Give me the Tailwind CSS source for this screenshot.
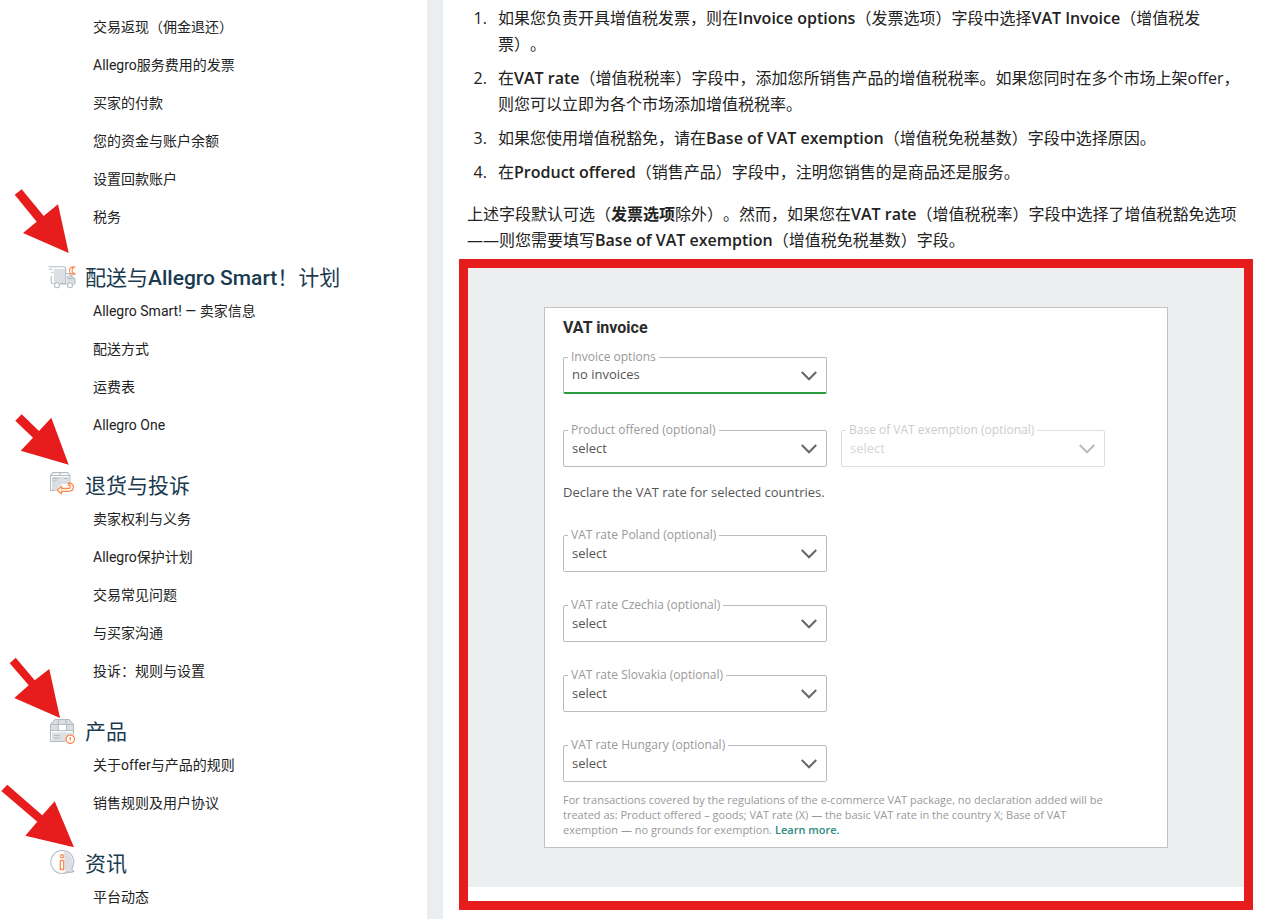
<!DOCTYPE html>
<html lang="zh-CN">
<head>
    <meta charset="UTF-8">
    <meta name="viewport" content="width=device-width, initial-scale=1.0">
    <title>Allegro 卖家帮助 - VAT invoice</title>
    <script src="https://cdn.jsdelivr.net/npm/@tailwindcss/browser@4"></script>
</head>
<body class="relative bg-[#ebeef1] text-[#222] [text-spacing-trim:space-all]">
    <div class="flex gap-4 min-h-screen">
        <!-- Sidebar -->
        <nav class="w-[427px] shrink-0 bg-white pl-12 pt-2 font-['Roboto','Noto_Sans_CJK_SC',sans-serif] text-sm">
            <ul class="pl-[45px] leading-[38px]">
                <li><a href="#">交易返现（佣金退还）</a></li>
                <li><a href="#">Allegro服务费用的发票</a></li>
                <li><a href="#">买家的付款</a></li>
                <li><a href="#">您的资金与账户余额</a></li>
                <li><a href="#">设置回款账户</a></li>
                <li><a href="#">税务</a></li>
            </ul>

            <h2 class="flex items-center gap-[9px] mt-7 h-7 text-[21px] leading-7 font-normal text-[#1a3a4f]">
                <svg class="size-7 shrink-0" viewBox="0 0 28 28" fill="none" stroke="#b4bcc3" stroke-width="1.1">
                    <path d="M6 5h12v14H6zM19 13l2-3h3l3 4v5h-8z" fill="#dbdfe4" stroke="none"/>
                    <path d="M.5 2.7h15.2a2 2 0 0 1 2 2v14.8H12M6.2 19.5H4.7a1.5 1.5 0 0 1-1.5-1.5v-6"/>
                    <path d="M1 5.2h3.200M3 8.200h2.500M18 9.500h3.500l3 4.500 2.500 1v5h-2M19.500 20H12M20 12v2.500h4"/>
                    <circle cx="9" cy="21.3" r="2.5" fill="#fff"/>
                    <circle cx="22" cy="21.3" r="2.5" fill="#fff"/>
                    <path d="M26.5 3c-3.5-.6-5.5 1.5-5 4 .4 2.5 3 4 5.500 3-2-.8-3-2-3-3.700S25 3.700 26.500 3z" stroke="#fa8b4f"/>
                </svg>
                <span>配送与<span class="font-medium">Allegro Smart</span>！计划</span>
            </h2>
            <ul class="pl-[45px] leading-[38px]">
                <li><a href="#">Allegro Smart! — 卖家信息</a></li>
                <li><a href="#">配送方式</a></li>
                <li><a href="#">运费表</a></li>
                <li><a href="#">Allegro One</a></li>
            </ul>

            <h2 class="flex items-center gap-[9px] mt-7 h-7 text-[21px] leading-7 font-normal text-[#1a3a4f]">
                <svg class="size-7 shrink-0" viewBox="0 0 28 28" fill="none" stroke="#b4bcc3" stroke-width="1.1">
                    <path d="M4 5h17v7h-7l-6 6H4z" fill="#dbdfe4" stroke="none"/>
                    <path d="M7.5 18.5h-5v-15L5 .6h14.5L22 3.500V11M2.500 3.500H22M12.200.6v2.900M4.500 6.500h6M4.500 9h4M16 6.500h3.500"/>
                    <path d="M13.5 14.5v2h7c2.500 0 2.500-3.500 0-3.500v-2c6.500-.2 6.500 8.300 0 8.300h-7v2.400L9 18z" stroke="#fa8b4f" stroke-width="1.3" fill="#fff"/>
                </svg>
                退货与投诉
            </h2>
            <ul class="pl-[45px] leading-[38px]">
                <li><a href="#">卖家权利与义务</a></li>
                <li><a href="#">Allegro保护计划</a></li>
                <li><a href="#">交易常见问题</a></li>
                <li><a href="#">与买家沟通</a></li>
                <li><a href="#">投诉：规则与设置</a></li>
            </ul>

            <h2 class="flex items-center gap-[9px] mt-7 h-7 text-[21px] leading-7 font-normal text-[#1a3a4f]">
                <svg class="size-7 shrink-0" viewBox="0 0 28 28" fill="none" stroke="#b4bcc3" stroke-width="1.1">
                    <path d="M4 14.5h21v4h-5l-2 5H4z" fill="#dbdfe4" stroke="none"/>
                    <path d="M2.5 6.5 7 1.5h14l4.500 5v6h-23z" fill="#dbdfe4"/>
                    <path d="M11 1.5 10 6.5M17.5 1.5l1 5M2.500 12.500V23.500H17M25.500 12.500V16.500M2.500 6.500h23"/>
                    <path d="M10.2 6.5h8.300v6.300h-8.300z" fill="#fff"/>
                    <path d="M6 17.5h6M6 20h6"/>
                    <circle cx="22.3" cy="21.3" r="4.2" fill="#fff" stroke="#fa8b4f" stroke-width="1.3"/>
                    <path d="M22.3 18.9v3.700" stroke="#fa8b4f" stroke-width="1.3"/>
                </svg>
                产品
            </h2>
            <ul class="pl-[45px] leading-[38px]">
                <li><a href="#">关于offer与产品的规则</a></li>
                <li><a href="#">销售规则及用户协议</a></li>
            </ul>

            <h2 class="flex items-center gap-[9px] mt-7 h-7 text-[21px] leading-7 font-normal text-[#1a3a4f]">
                <svg class="size-7 shrink-0" viewBox="0 0 28 28" fill="none" stroke="#b4bcc3" stroke-width="1.1">
                    <path d="M16 1.5c8 2 11 11 7.500 17.500l2 2.300c-3 .4-4 2.200-8.500 2.200z" fill="#dbdfe4" stroke="none"/>
                    <path d="M23.8 18.5A11.5 11.5 0 1 0 14 23.500c2.500 0 4-.4 5.800-1.500 2 .6 4.500.3 6-.7-1.200-.5-1.800-1.500-2-2.800z"/>
                    <circle cx="14" cy="6.3" r="1.6" fill="#fff" stroke="#fa8b4f" stroke-width="1.3"/>
                    <rect x="12.3" y="10.5" width="3.4" height="9" rx=".6" fill="#fff" stroke="#fa8b4f" stroke-width="1.3"/>
                </svg>
                资讯
            </h2>
            <ul class="pl-[45px] leading-[38px]">
                <li><a href="#">平台动态</a></li>
            </ul>
        </nav>

        <!-- Article -->
        <main class="flex-1 min-w-0 bg-white pt-[5px] pl-4 pr-[9px] font-['Open_Sans','Noto_Sans_CJK_SC',sans-serif]">
            <div class="px-2 text-base leading-[26px]">
                <ol class="list-decimal pl-6 space-y-2">
                    <li class="pl-[7px]">如果您负责开具增值税发票，则在<b class="font-semibold">Invoice options</b>（发票选项）字段中选择<b class="font-semibold">VAT Invoice</b>（增值税发票）。</li>
                    <li class="pl-[7px]">在<b class="font-semibold">VAT rate</b>（增值税税率）字段中，添加您所销售产品的增值税税率。如果您同时在多个市场上架offer，则您可以立即为各个市场添加增值税税率。</li>
                    <li class="pl-[7px]">如果您使用增值税豁免，请在<b class="font-semibold">Base of VAT exemption</b>（增值税免税基数）字段中选择原因。</li>
                    <li class="pl-[7px]">在<b class="font-semibold">Product offered</b>（销售产品）字段中，注明您销售的是商品还是服务。</li>
                </ol>
                <p class="mt-4">上述字段默认可选（<b>发票选项</b>除外）。然而，如果您在<b class="font-semibold">VAT rate</b>（增值税税率）字段中选择了增值税豁免选项——则您需要填写<b class="font-semibold">Base of VAT exemption</b>（增值税免税基数）字段。</p>
            </div>

            <div class="mt-1.5 border-[9px] border-[#e71d1d] pb-3.5">
                <div class="bg-[#edeef0] px-[76px] py-[39px]">
                    <form class="bg-white border border-[#bfc1c4] px-[18px] py-2.5 text-[13px] text-[#555]">
                        <h3 class="font-['Roboto',sans-serif] font-bold text-base leading-5 text-[#2b2b2b]">VAT invoice</h3>

                        <div class="relative mt-[19px] w-[264px]">
                            <label for="invoiceOptions" class="absolute left-[5px] -top-2 bg-white px-[3px] text-xs leading-4 text-[#999]">Invoice options</label>
                            <select id="invoiceOptions" class="block w-full h-[37px] appearance-none rounded-xs border border-b-2 border-[#bbb] border-b-[#2b9d3f] bg-white px-2">
                                <option>no invoices</option>
                            </select>
                            <svg class="absolute right-2.5 top-3.5 w-4 h-[10px] pointer-events-none" viewBox="0 0 16 10" fill="none" stroke="#666" stroke-width="2"><path d="M.8 1 8 8.3 15.2 1"/></svg>
                        </div>

                        <div class="flex gap-3.5 mt-9">
                            <div class="relative w-[264px]">
                                <label for="productOffered" class="absolute left-[5px] -top-2 bg-white px-[3px] text-xs leading-4 text-[#999]">Product offered (optional)</label>
                                <select id="productOffered" class="block w-full h-[37px] appearance-none rounded-xs border border-[#bbb] bg-white px-2">
                                    <option>select</option>
                                </select>
                                <svg class="absolute right-2.5 top-3.5 w-4 h-[10px] pointer-events-none" viewBox="0 0 16 10" fill="none" stroke="#666" stroke-width="2"><path d="M.8 1 8 8.3 15.2 1"/></svg>
                            </div>
                            <div class="relative w-[264px]">
                                <label for="vatExemption" class="absolute left-[5px] -top-2 bg-white px-[3px] text-xs leading-4 text-[#ccc]">Base of VAT exemption (optional)</label>
                                <select id="vatExemption" disabled class="block w-full h-[37px] appearance-none rounded-xs border border-[#ddd] bg-white px-2 text-[#d5d5d5] opacity-100">
                                    <option>select</option>
                                </select>
                                <svg class="absolute right-2.5 top-3.5 w-4 h-[10px] pointer-events-none" viewBox="0 0 16 10" fill="none" stroke="#bbb" stroke-width="2"><path d="M.8 1 8 8.3 15.2 1"/></svg>
                            </div>
                        </div>

                        <p class="mt-[15px] leading-5">Declare the VAT rate for selected countries.</p>

                        <div class="mt-[33px] w-[264px] space-y-[33px]">
                            <div class="relative">
                                <label for="vatPoland" class="absolute left-[5px] -top-2 bg-white px-[3px] text-xs leading-4 text-[#999]">VAT rate Poland (optional)</label>
                                <select id="vatPoland" class="block w-full h-[37px] appearance-none rounded-xs border border-[#bbb] bg-white px-2">
                                    <option>select</option>
                                </select>
                                <svg class="absolute right-2.5 top-3.5 w-4 h-[10px] pointer-events-none" viewBox="0 0 16 10" fill="none" stroke="#666" stroke-width="2"><path d="M.8 1 8 8.3 15.2 1"/></svg>
                            </div>
                            <div class="relative">
                                <label for="vatCzechia" class="absolute left-[5px] -top-2 bg-white px-[3px] text-xs leading-4 text-[#999]">VAT rate Czechia (optional)</label>
                                <select id="vatCzechia" class="block w-full h-[37px] appearance-none rounded-xs border border-[#bbb] bg-white px-2">
                                    <option>select</option>
                                </select>
                                <svg class="absolute right-2.5 top-3.5 w-4 h-[10px] pointer-events-none" viewBox="0 0 16 10" fill="none" stroke="#666" stroke-width="2"><path d="M.8 1 8 8.3 15.2 1"/></svg>
                            </div>
                            <div class="relative">
                                <label for="vatSlovakia" class="absolute left-[5px] -top-2 bg-white px-[3px] text-xs leading-4 text-[#999]">VAT rate Slovakia (optional)</label>
                                <select id="vatSlovakia" class="block w-full h-[37px] appearance-none rounded-xs border border-[#bbb] bg-white px-2">
                                    <option>select</option>
                                </select>
                                <svg class="absolute right-2.5 top-3.5 w-4 h-[10px] pointer-events-none" viewBox="0 0 16 10" fill="none" stroke="#666" stroke-width="2"><path d="M.8 1 8 8.3 15.2 1"/></svg>
                            </div>
                            <div class="relative">
                                <label for="vatHungary" class="absolute left-[5px] -top-2 bg-white px-[3px] text-xs leading-4 text-[#999]">VAT rate Hungary (optional)</label>
                                <select id="vatHungary" class="block w-full h-[37px] appearance-none rounded-xs border border-[#bbb] bg-white px-2">
                                    <option>select</option>
                                </select>
                                <svg class="absolute right-2.5 top-3.5 w-4 h-[10px] pointer-events-none" viewBox="0 0 16 10" fill="none" stroke="#666" stroke-width="2"><path d="M.8 1 8 8.3 15.2 1"/></svg>
                            </div>
                        </div>

                        <p class="mt-2.5 max-w-[560px] text-[11px] leading-[15px] text-[#999]">For transactions covered by the regulations of the e-commerce VAT package, no declaration added will be treated as: Product offered – goods; VAT rate (X) — the basic VAT rate in the country X; Base of VAT exemption — no grounds for exemption. <a href="#" class="font-semibold text-[#2f8a80]">Learn more.</a></p>
                    </form>
                </div>
            </div>
        </main>
    </div>

    <!-- Red arrows pointing at the section icons -->
    <svg class="absolute left-0 top-0 w-20 h-[860px] pointer-events-none" viewBox="0 0 80 860" fill="#e71d1d">
        <path d="M21.7 189.3 43.7 216 58 204.3 68.7 253 23 233l13.7-11.3-22-27z"/>
        <path d="M21.7 414.3 39 431l12.3-13.3 17.4 47-48-14L33 437.7l-17.7-17z"/>
        <path d="M15.7 657.7l19 22.6L49.3 669 60 718l-45.7-20 14.4-12.7-19-22z"/>
        <path d="M7.3 784.7l35 30.6 12.4-14L74 847.3l-48.7-11.6 12-14L1.3 791z"/>
    </svg>
</body>
</html>
